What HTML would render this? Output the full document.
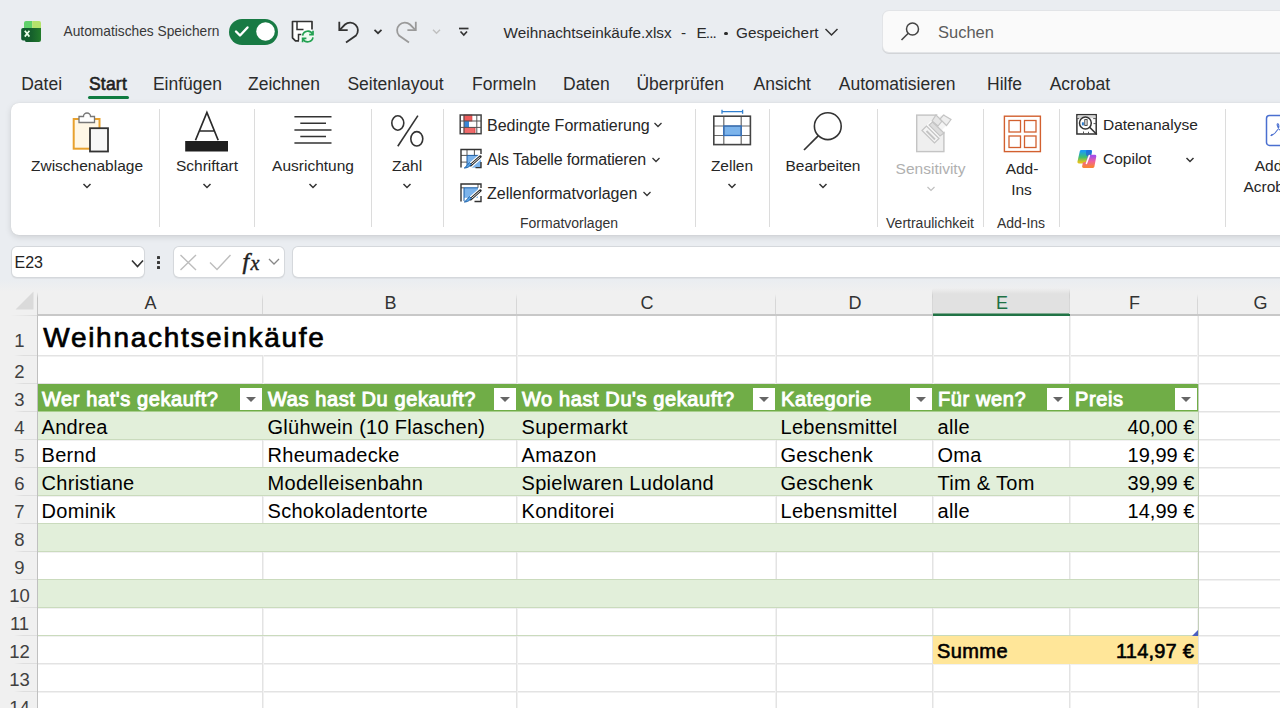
<!DOCTYPE html>
<html><head><meta charset="utf-8"><style>
html,body{margin:0;padding:0;}
body{width:1280px;height:708px;overflow:hidden;position:relative;background:#eaedf1;font-family:"Liberation Sans",sans-serif;}
.t{position:absolute;white-space:nowrap;line-height:1;}
.r{position:absolute;}
svg.r{overflow:visible;}
</style></head><body>
<svg class="r" style="left:14px;top:14px;" width="34" height="34" viewBox="0 0 34 34">
<defs><linearGradient id="xlb" x1="0" y1="0" x2="1" y2="0"><stop offset="0" stop-color="#0d5a2f"/><stop offset="0.5" stop-color="#155f2c"/><stop offset="1" stop-color="#237b2b"/></linearGradient></defs>
<path d="M10 9 Q10 7 12 7 H18.2 V14.2 H10z" fill="#60d16b"/>
<path d="M18.2 7 H25.2 Q27 7 27 9 V14.2 H18.2z" fill="#b4e36b"/>
<path d="M9 14 H27 V26 Q27 28 25 28 H12.5 Q11 28 11 26.5 H9 Q7.2 26.5 7.2 24.7 V15.8 Q7.2 14 9 14z" fill="url(#xlb)"/>
<path d="M10.8 16.8 L15.4 22.6 M15.4 16.8 L10.8 22.6" stroke="#e9ffe9" stroke-width="1.7"/>
</svg>
<span class="t" style="top:25.31px;font-size:13.75px;color:#383838;left:63.50px;">Automatisches Speichern</span>
<div class="r" style="left:229px;top:18.5px;width:48.5px;height:26px;background:#187a44;border-radius:13px;"></div>
<svg class="r" style="left:228px;top:18px;" width="49" height="27" viewBox="0 0 49 27">
<path d="M8 13.5 L12 17.5 L19.5 9.5" stroke="#fff" stroke-width="2.4" fill="none" stroke-linecap="round" stroke-linejoin="round"/>
<circle cx="37.5" cy="13.5" r="9.3" fill="#fff"/>
</svg>
<svg class="r" style="left:285px;top:15px;" width="40" height="33" viewBox="0 0 40 33">
<path d="M7.5 6.5 H27 V22 L22 26 H10.5 L7.5 23z" fill="#fff"/>
<path d="M14 25.8 H10.5 L7.5 22.8 V6.5 H27 V14.5" stroke="#333" stroke-width="1.7" fill="none" stroke-linejoin="round"/>
<path d="M12 6.5 V14.5 H18.5" stroke="#333" stroke-width="1.5" fill="none"/>
<path d="M13.5 25.5 V19.5 H16.5" stroke="#333" stroke-width="1.5" fill="none"/>
<circle cx="22.8" cy="21.4" r="6.6" fill="#eef9f0"/>
<path d="M17.6 20.6 A5.3 5.3 0 0 1 27.6 19.2" stroke="#22a052" stroke-width="1.7" fill="none"/>
<path d="M28 15.8 V19.6 H24.2" stroke="#22a052" stroke-width="1.7" fill="none"/>
<path d="M28 22.4 A5.3 5.3 0 0 1 18 23.8" stroke="#22a052" stroke-width="1.7" fill="none"/>
<path d="M17.6 27.2 V23.3 H21.4" stroke="#22a052" stroke-width="1.7" fill="none"/>
</svg>
<svg class="r" style="left:332px;top:15px;" width="144" height="33" viewBox="0 0 144 33">
<path d="M7.3 6.7 V15.2 H15.7" stroke="#333" stroke-width="1.8" fill="none"/>
<path d="M7.8 14.8 L13 9.5 A7.8 7.8 0 0 1 24 20.5 L14 27.5" stroke="#333" stroke-width="1.8" fill="none"/>
<path d="M42.5 14.8 L46 18.2 L49.5 14.8" stroke="#333" stroke-width="1.7" fill="none"/>
<path d="M83.8 6.7 V15.2 H75.4" stroke="#9a9a9a" stroke-width="1.8" fill="none"/>
<path d="M83.3 14.8 L78 9.5 A7.8 7.8 0 0 0 67 20.5 L77 27.5" stroke="#9a9a9a" stroke-width="1.8" fill="none"/>
<path d="M101 14.8 L104.5 18.2 L108 14.8" stroke="#c0c0c0" stroke-width="1.5" fill="none"/>
<path d="M127 13.5 H136.5" stroke="#333" stroke-width="1.7"/>
<path d="M128.5 16.5 L131.8 20 L135 16.5" stroke="#333" stroke-width="1.7" fill="none"/>
</svg>
<span class="t" style="top:24.99px;font-size:15.3px;color:#2b2b2b;left:503.60px;">Weihnachtseinkäufe.xlsx</span>
<span class="t" style="top:24.99px;font-size:15.3px;color:#2b2b2b;left:681.00px;">-</span>
<span class="t" style="top:24.99px;font-size:15.3px;color:#2b2b2b;letter-spacing:-0.9px;left:696.50px;">E...</span>
<div class="r" style="left:724px;top:31.5px;width:3.5px;height:3.5px;background:#2b2b2b;border-radius:2px;"></div>
<span class="t" style="top:24.99px;font-size:15.3px;color:#2b2b2b;left:736.00px;">Gespeichert</span>
<svg class="r" style="left:824px;top:27px;" width="16" height="10" viewBox="0 0 16 10"><path d="M1.5 2 L7.5 8 L13.5 2" stroke="#333" stroke-width="1.5" fill="none"/></svg>
<div class="r" style="left:883px;top:11px;width:420px;height:41px;background:#fafafa;border-radius:6px;box-shadow:0 0 0 1px #e2e4e7, 0 1px 0 1px #d2d4d7;"></div>
<svg class="r" style="left:898px;top:20px;" width="24" height="24" viewBox="0 0 24 24">
<circle cx="14.5" cy="9" r="6" stroke="#444" stroke-width="1.5" fill="none"/>
<path d="M10.3 13.2 L3.5 20" stroke="#444" stroke-width="1.6"/>
</svg>
<span class="t" style="top:23.98px;font-size:16.5px;color:#5c5c5c;left:938.00px;">Suchen</span>
<span class="t" style="top:76.22px;font-size:17.5px;color:#2b2b2b;left:21.20px;">Datei</span>
<span class="t" style="top:76.22px;font-size:17.5px;color:#2b2b2b;left:152.90px;">Einfügen</span>
<span class="t" style="top:76.22px;font-size:17.5px;color:#2b2b2b;left:248.00px;">Zeichnen</span>
<span class="t" style="top:76.22px;font-size:17.5px;color:#2b2b2b;left:347.40px;">Seitenlayout</span>
<span class="t" style="top:76.22px;font-size:17.5px;color:#2b2b2b;left:472.00px;">Formeln</span>
<span class="t" style="top:76.22px;font-size:17.5px;color:#2b2b2b;left:563.00px;">Daten</span>
<span class="t" style="top:76.22px;font-size:17.5px;color:#2b2b2b;left:636.40px;">Überprüfen</span>
<span class="t" style="top:76.22px;font-size:17.5px;color:#2b2b2b;left:753.60px;">Ansicht</span>
<span class="t" style="top:76.22px;font-size:17.5px;color:#2b2b2b;left:838.80px;">Automatisieren</span>
<span class="t" style="top:76.22px;font-size:17.5px;color:#2b2b2b;left:987.00px;">Hilfe</span>
<span class="t" style="top:76.22px;font-size:17.5px;color:#2b2b2b;left:1049.70px;">Acrobat</span>
<span class="t" style="top:76.22px;font-size:17.5px;color:#1f1f1f;letter-spacing:0.2px;left:89.00px;-webkit-text-stroke:0.6px #1f1f1f;">Start</span>
<div class="r" style="left:88px;top:96px;width:41px;height:3px;background:#107c41;border-radius:2px;"></div>
<div class="r" style="left:10.5px;top:103px;width:1300px;height:132px;background:#ffffff;border-radius:8px;box-shadow:0 2px 6px rgba(0,0,0,0.13), 0 0 1px rgba(0,0,0,0.12);"></div>
<div class="r" style="left:159px;top:109px;width:1px;height:118px;background:#dcdcdc;"></div>
<div class="r" style="left:254px;top:109px;width:1px;height:118px;background:#dcdcdc;"></div>
<div class="r" style="left:371px;top:109px;width:1px;height:118px;background:#dcdcdc;"></div>
<div class="r" style="left:443px;top:109px;width:1px;height:118px;background:#dcdcdc;"></div>
<div class="r" style="left:695px;top:109px;width:1px;height:118px;background:#dcdcdc;"></div>
<div class="r" style="left:769px;top:109px;width:1px;height:118px;background:#dcdcdc;"></div>
<div class="r" style="left:877px;top:109px;width:1px;height:118px;background:#dcdcdc;"></div>
<div class="r" style="left:983px;top:109px;width:1px;height:118px;background:#dcdcdc;"></div>
<div class="r" style="left:1059px;top:109px;width:1px;height:118px;background:#dcdcdc;"></div>
<div class="r" style="left:1225px;top:109px;width:1px;height:118px;background:#dcdcdc;"></div>
<svg class="r" style="left:66px;top:106px;" width="50" height="50" viewBox="0 0 50 50">
<rect x="7.7" y="13" width="25.8" height="29.7" fill="#fff7e6" stroke="#e8a12e" stroke-width="2"/>
<path d="M13 10.5 H17.5 A3.5 3.5 0 0 1 24.5 10.5 H28.5 V16.5 H13z" fill="#fff" stroke="#777" stroke-width="1.3"/>
<rect x="24" y="22.2" width="18" height="23.3" fill="#f7f7f7" stroke="#333" stroke-width="1.8"/>
</svg>
<span class="t" style="top:158.42px;font-size:15.5px;color:#262626;left:87.00px;transform:translateX(-50%);">Zwischenablage</span>
<svg class="r" style="left:81.5px;top:182px;" width="10" height="8" viewBox="0 0 10 8"><path d="M1.5 2 L5 5.5 L8.5 2" stroke="#333" stroke-width="1.5" fill="none"/></svg>
<svg class="r" style="left:180px;top:108px;" width="52" height="48" viewBox="0 0 52 48">
<path d="M15.5 32.2 L26.9 4.4 L38.2 32.2 M19.3 23 H34.5" stroke="#2a2a2a" stroke-width="1.7" fill="none"/>
<rect x="5.2" y="33" width="42.8" height="10.5" fill="#1e1e1e"/>
</svg>
<span class="t" style="top:158.42px;font-size:15.5px;color:#262626;left:207.00px;transform:translateX(-50%);">Schriftart</span>
<svg class="r" style="left:201.5px;top:182px;" width="10" height="8" viewBox="0 0 10 8"><path d="M1.5 2 L5 5.5 L8.5 2" stroke="#333" stroke-width="1.5" fill="none"/></svg>
<svg class="r" style="left:290px;top:110px;" width="46" height="40" viewBox="0 0 46 40">
<path d="M4.4 6.8 H41.5 M10.3 13.3 H36 M4.4 20 H41.5 M10.3 26.6 H36 M4.4 33.1 H41.5" stroke="#333" stroke-width="1.5"/>
</svg>
<span class="t" style="top:158.42px;font-size:15.5px;color:#262626;left:313.00px;transform:translateX(-50%);">Ausrichtung</span>
<svg class="r" style="left:308px;top:182px;" width="10" height="8" viewBox="0 0 10 8"><path d="M1.5 2 L5 5.5 L8.5 2" stroke="#333" stroke-width="1.5" fill="none"/></svg>
<svg class="r" style="left:388px;top:112px;" width="40" height="38" viewBox="0 0 40 38">
<ellipse cx="9.8" cy="11" rx="6" ry="7.2" stroke="#333" stroke-width="1.6" fill="none"/>
<ellipse cx="28.8" cy="26.8" rx="6" ry="7.2" stroke="#333" stroke-width="1.6" fill="none"/>
<path d="M29.9 3.6 L9.8 34.2" stroke="#333" stroke-width="1.6"/>
</svg>
<span class="t" style="top:158.42px;font-size:15.5px;color:#262626;left:407.00px;transform:translateX(-50%);">Zahl</span>
<svg class="r" style="left:401.5px;top:182px;" width="10" height="8" viewBox="0 0 10 8"><path d="M1.5 2 L5 5.5 L8.5 2" stroke="#333" stroke-width="1.5" fill="none"/></svg>
<svg class="r" style="left:456px;top:110px;" width="32" height="96" viewBox="0 0 32 96">
<rect x="4.2" y="5" width="20.9" height="18.7" fill="#fff"/>
<rect x="8" y="5" width="7.9" height="6" fill="#ee5a5a" stroke="#d83a3a" stroke-width="0.8"/>
<rect x="8" y="11" width="5" height="6.4" fill="#3a86d6"/>
<rect x="8" y="17.4" width="11" height="6.3" fill="#f06a6a" stroke="#d83a3a" stroke-width="0.8"/>
<path d="M4.2 11 H25.1 M4.2 17.4 H25.1 M8 5 V23.7 M20.8 5 V23.7" stroke="#555" stroke-width="1"/>
<rect x="4.2" y="5" width="20.9" height="18.7" fill="none" stroke="#444" stroke-width="1.5"/>
<rect x="11" y="45.4" width="14" height="12.2" fill="#7cb4ec"/>
<path d="M11 45.4 H23 M11 45.4 V57.6" stroke="#1a5fa8" stroke-width="1"/>
<path d="M5 45.4 H11 M5 52.1 H11 M11 39.5 V45.4 M18.4 39.5 V45.4" stroke="#555" stroke-width="1"/>
<path d="M5 57.6 V39.5 H25 V44" stroke="#333" stroke-width="1.4" fill="none"/>
<path d="M25 52 V57.6 H19.5" stroke="#333" stroke-width="1.4" fill="none"/>
<path d="M24.4 46.6 L13.6 56.2" stroke="#fff" stroke-width="5" stroke-linecap="round"/>
<path d="M24.4 46.6 L14.6 55.2" stroke="#2a2a2a" stroke-width="2.6" stroke-linecap="round"/>
<path d="M23.8 47.2 L15 54.8" stroke="#f4f4f4" stroke-width="0.9"/>
<path d="M8.3 58 C10.8 58 12.8 57 13.9 55.8 L15.3 54.3 L13.6 52.7 L12 54.2 C10.8 55.4 10.2 56.8 8.3 58z" fill="#5aa9ee" stroke="#1a5fa8" stroke-width="1"/>
<rect x="8" y="77.8" width="14" height="10" fill="#7cb4ec"/>
<path d="M8 77.8 H22 M8 77.8 V91" stroke="#1a5fa8" stroke-width="1"/>
<path d="M5 77.8 H8 M22 74 V77.8" stroke="#555" stroke-width="1"/>
<path d="M5 91.5 V74 H25 V78" stroke="#333" stroke-width="1.4" fill="none"/>
<path d="M25 86 V91.5 H18.5" stroke="#333" stroke-width="1.4" fill="none"/>
<path d="M24.4 80.6 L13.6 90.2" stroke="#fff" stroke-width="5" stroke-linecap="round"/>
<path d="M24.4 80.6 L14.6 89.2" stroke="#2a2a2a" stroke-width="2.6" stroke-linecap="round"/>
<path d="M23.8 81.2 L15 88.8" stroke="#f4f4f4" stroke-width="0.9"/>
<path d="M8.3 92 C10.8 92 12.8 91 13.9 89.8 L15.3 88.3 L13.6 86.7 L12 88.2 C10.8 89.4 10.2 90.8 8.3 92z" fill="#5aa9ee" stroke="#1a5fa8" stroke-width="1"/>
</svg>
<span class="t" style="top:117.90px;font-size:16px;color:#262626;left:487.00px;">Bedingte Formatierung</span>
<span class="t" style="top:151.90px;font-size:16px;color:#262626;letter-spacing:-0.15px;left:487.00px;">Als Tabelle formatieren</span>
<span class="t" style="top:185.90px;font-size:16px;color:#262626;left:487.00px;">Zellenformatvorlagen</span>
<svg class="r" style="left:653px;top:121px;" width="10" height="8" viewBox="0 0 10 8"><path d="M1.5 2 L5 5.5 L8.5 2" stroke="#333" stroke-width="1.3" fill="none"/></svg>
<svg class="r" style="left:650.5px;top:155.5px;" width="10" height="8" viewBox="0 0 10 8"><path d="M1.5 2 L5 5.5 L8.5 2" stroke="#333" stroke-width="1.3" fill="none"/></svg>
<svg class="r" style="left:641.5px;top:189.5px;" width="10" height="8" viewBox="0 0 10 8"><path d="M1.5 2 L5 5.5 L8.5 2" stroke="#333" stroke-width="1.3" fill="none"/></svg>
<span class="t" style="top:216.10px;font-size:14px;color:#333;left:569.00px;transform:translateX(-50%);">Formatvorlagen</span>
<svg class="r" style="left:710px;top:106px;" width="46" height="44" viewBox="0 0 46 44">
<path d="M12 5.7 H32.6 M12 3.7 V7.7 M32.6 3.7 V7.7" stroke="#2f7fd0" stroke-width="1.3"/>
<rect x="13.8" y="20" width="17.4" height="9.5" fill="#7cb4ec"/>
<path d="M3.8 20 H40.4 M3.8 29.5 H40.4 M13.8 10.2 V38.6 M31.2 10.2 V38.6" stroke="#6a6a6a" stroke-width="1.2"/>
<rect x="13.8" y="20" width="17.4" height="9.5" fill="none" stroke="#2f6fbf" stroke-width="1.3"/>
<rect x="3.8" y="10.2" width="36.6" height="28.4" fill="none" stroke="#444" stroke-width="1.6"/>
</svg>
<span class="t" style="top:158.42px;font-size:15.5px;color:#262626;left:732.00px;transform:translateX(-50%);">Zellen</span>
<svg class="r" style="left:726.5px;top:182px;" width="10" height="8" viewBox="0 0 10 8"><path d="M1.5 2 L5 5.5 L8.5 2" stroke="#333" stroke-width="1.5" fill="none"/></svg>
<svg class="r" style="left:800px;top:108px;" width="46" height="46" viewBox="0 0 46 46">
<circle cx="27.8" cy="18.2" r="13.4" stroke="#333" stroke-width="1.6" fill="none"/>
<path d="M18.4 27.6 L4 42" stroke="#333" stroke-width="1.7"/>
</svg>
<span class="t" style="top:158.42px;font-size:15.5px;color:#262626;left:823.00px;transform:translateX(-50%);">Bearbeiten</span>
<svg class="r" style="left:817.5px;top:182px;" width="10" height="8" viewBox="0 0 10 8"><path d="M1.5 2 L5 5.5 L8.5 2" stroke="#333" stroke-width="1.5" fill="none"/></svg>
<svg class="r" style="left:905px;top:105px;" width="55" height="55" viewBox="0 0 55 55">
<rect x="11.7" y="10.1" width="27.2" height="36.5" fill="#efefef" stroke="#c4c4c4" stroke-width="1.4"/>
<path d="M24 20 L36 8 L46 18 L34 30z" fill="#f4f4f4" stroke="#fff" stroke-width="3"/>
<path d="M27 16 L31 10 L37 16 L33 21z" fill="#e6e6e6" stroke="#c4c4c4" stroke-width="1.2"/>
<path d="M38.5 10 L46 14.5 L41.5 20.5 L35 14z" fill="#efefef" stroke="#c4c4c4" stroke-width="1.2"/>
<path d="M27.5 17 L39 28 L35 31 L24 20z" fill="#ddd" stroke="#c4c4c4" stroke-width="1.2"/>
<path d="M17 25.5 L21.5 21 L34 33.5 L29.5 38z" fill="#f4f4f4" stroke="#c4c4c4" stroke-width="1.2"/>
<path d="M21.5 26 L30 34.5" stroke="#c4c4c4" stroke-width="2"/>
</svg>
<span class="t" style="top:161.32px;font-size:15.5px;color:#b0b0b0;left:930.50px;transform:translateX(-50%);">Sensitivity</span>
<svg class="r" style="left:925.5px;top:185px;" width="10" height="8" viewBox="0 0 10 8"><path d="M1.5 2 L5 5.5 L8.5 2" stroke="#c0c0c0" stroke-width="1.2" fill="none"/></svg>
<span class="t" style="top:215.60px;font-size:14px;color:#333;left:930.00px;transform:translateX(-50%);">Vertraulichkeit</span>
<svg class="r" style="left:1000px;top:112px;" width="44" height="44" viewBox="0 0 44 44">
<rect x="4.4" y="4.2" width="36" height="35.4" fill="none" stroke="#d2602f" stroke-width="1.4"/>
<rect x="9" y="8.5" width="11.5" height="11.5" fill="none" stroke="#d2602f" stroke-width="1.3"/>
<rect x="24.5" y="8.5" width="11.5" height="11.5" fill="none" stroke="#d2602f" stroke-width="1.3"/>
<rect x="9" y="24" width="11.5" height="11.5" fill="none" stroke="#d2602f" stroke-width="1.3"/>
<rect x="24.5" y="24" width="11.5" height="11.5" fill="none" stroke="#d2602f" stroke-width="1.3"/>
</svg>
<span class="t" style="top:160.62px;font-size:15.5px;color:#262626;left:1022.00px;transform:translateX(-50%);">Add-</span>
<span class="t" style="top:181.82px;font-size:15.5px;color:#262626;left:1021.50px;transform:translateX(-50%);">Ins</span>
<span class="t" style="top:216.10px;font-size:14px;color:#333;left:1021.00px;transform:translateX(-50%);">Add-Ins</span>
<svg class="r" style="left:1072px;top:110px;" width="30" height="62" viewBox="0 0 30 62">
<rect x="4.9" y="4.7" width="19.3" height="19.3" fill="#fff" stroke="#333" stroke-width="1.5"/>
<rect x="5.6" y="5.4" width="17.9" height="2.8" fill="#d4d4d4"/>
<path d="M24.2 8.6 H21.2 M24.2 13.6 H21.5 M11.5 24 V21.5 M16.5 24 V21.8 M4.9 8.6 H7.2" stroke="#555" stroke-width="1"/>
<circle cx="13.4" cy="13" r="5.9" fill="#fff" stroke="#333" stroke-width="1.5"/>
<rect x="9.9" y="12.3" width="2" height="3.1" fill="#2f7fd0"/>
<rect x="12.8" y="9.6" width="2.3" height="5.8" fill="#fff" stroke="#333" stroke-width="0.9"/>
<path d="M17.6 17.2 L24.9 24.5" stroke="#333" stroke-width="1.6"/>
<defs><linearGradient id="cp2" x1="0" y1="0" x2="0" y2="1"><stop offset="0" stop-color="#1b9ef0"/><stop offset="0.55" stop-color="#3fbf6e"/><stop offset="1" stop-color="#e0c21c"/></linearGradient>
<linearGradient id="cp" x1="0" y1="0" x2="0" y2="1"><stop offset="0" stop-color="#a64ee8"/><stop offset="0.5" stop-color="#f0609c"/><stop offset="1" stop-color="#f9823a"/></linearGradient></defs>
<path d="M9.2 41.4 H18.6 L17.9 44.6 H15.3 L13 52 H6.8z" fill="url(#cp2)" stroke="url(#cp2)" stroke-width="2.8" stroke-linejoin="round"/>
<path d="M15.3 41.4 H18.6 L17.9 44.6 H15.3z" fill="#2160d8" stroke="#2160d8" stroke-width="2.6" stroke-linejoin="round" opacity="0.7"/>
<path d="M17.4 46.2 H22.9 L21 56.6 H11.5 L12.1 53.6 H14.8z" fill="url(#cp)" stroke="url(#cp)" stroke-width="2.8" stroke-linejoin="round"/>
<path d="M17.4 45.6 L14.4 53.4" stroke="#fff" stroke-width="1.5" stroke-linecap="round"/>
</svg>
<span class="t" style="top:117.33px;font-size:15.5px;color:#262626;left:1103.00px;">Datenanalyse</span>
<span class="t" style="top:151.22px;font-size:15.5px;color:#262626;left:1103.00px;">Copilot</span>
<svg class="r" style="left:1185px;top:155.5px;" width="10" height="8" viewBox="0 0 10 8"><path d="M1.5 2 L5 5.5 L8.5 2" stroke="#333" stroke-width="1.5" fill="none"/></svg>
<svg class="r" style="left:1262px;top:112px;" width="30" height="38" viewBox="0 0 30 38">
<rect x="4.5" y="3.6" width="26" height="29.8" rx="3" fill="none" stroke="#4a6fd0" stroke-width="1.5"/>
<path d="M9 23.8 C10.5 22.5 11.8 22.3 13 21 L15.8 17.5 C16.8 16 17 13.8 16.6 12.6 C16.1 11.3 14.9 11.6 15.2 13.2 C15.5 15 16.5 16.8 18.5 18.5" stroke="#4a6fd0" stroke-width="1.1" fill="none"/>
<path d="M9 23.8 C8.5 23 9.8 22 10.8 22.5" stroke="#4a6fd0" stroke-width="1" fill="none"/>
</svg>
<span class="t" style="top:158.12px;font-size:15.5px;color:#262626;left:1254.70px;">Add</span>
<span class="t" style="top:179.32px;font-size:15.5px;color:#262626;left:1243.40px;">Acrob</span>
<div class="r" style="left:12px;top:247px;width:132px;height:30px;background:#ffffff;border-radius:5px;box-shadow:0 0 0 1px #d5d8dc, 0 1px 1px 1px rgba(0,0,0,0.05);"></div>
<span class="t" style="top:255.40px;font-size:16px;color:#222;left:14.50px;">E23</span>
<svg class="r" style="left:128px;top:256px;" width="18" height="16" viewBox="0 0 18 16"><path d="M4 4.5 L9.5 10.5 L15 4.5" stroke="#333" stroke-width="1.6" fill="none"/></svg>
<div class="r" style="left:157px;top:255.5px;width:3px;height:3px;background:#3a3a3a;border-radius:0.6px;"></div>
<div class="r" style="left:157px;top:260.5px;width:3px;height:3px;background:#3a3a3a;border-radius:0.6px;"></div>
<div class="r" style="left:157px;top:265.5px;width:3px;height:3px;background:#3a3a3a;border-radius:0.6px;"></div>
<div class="r" style="left:173.5px;top:247px;width:110px;height:30px;background:#ffffff;border-radius:5px;box-shadow:0 0 0 1px #d5d8dc, 0 1px 1px 1px rgba(0,0,0,0.05);"></div>
<svg class="r" style="left:172px;top:246px;" width="114" height="32" viewBox="0 0 114 32">
<path d="M8.5 9 L24 24 M24 9 L8.5 24" stroke="#bdbdbd" stroke-width="1.4"/>
<path d="M38 16.5 L45 23.5 L58.5 9" stroke="#bdbdbd" stroke-width="1.4" fill="none"/>
<path d="M97 13 L102 18 L107 13" stroke="#888" stroke-width="1.3" fill="none"/>
</svg>
<span class="t" style="top:249.10px;font-size:24px;color:#222;left:242.50px;font-family:'Liberation Serif';font-style:italic;-webkit-text-stroke:0.5px #222;">f</span>
<span class="t" style="top:252.50px;font-size:20px;color:#222;left:250.50px;font-family:'Liberation Serif';font-style:italic;-webkit-text-stroke:0.4px #222;">x</span>
<div class="r" style="left:293px;top:247px;width:1010px;height:30px;background:#ffffff;border-radius:5px;box-shadow:0 0 0 1px #d5d8dc, 0 1px 1px 1px rgba(0,0,0,0.05);"></div>
<div class="r" style="left:0px;top:279px;width:1280px;height:37px;background:linear-gradient(#eaedf1 0px, #f0f0f0 13px);"></div>
<div class="r" style="left:0px;top:316px;width:37px;height:400px;background:#f0f0f0;"></div>
<div class="r" style="left:933px;top:288px;width:137px;height:27px;background:linear-gradient(rgba(225,225,225,0) 0px, #e1e1e1 6px);"></div>
<svg class="r" style="left:12px;top:288px;" width="26" height="26" viewBox="0 0 26 26"><path d="M21.5 3.5 V21.5 H3.5z" fill="#dadada"/></svg>
<div class="r" style="left:37px;top:314px;width:1243px;height:2px;background:#c8c8c8;"></div>
<div class="r" style="left:10px;top:315px;width:27px;height:1px;background:linear-gradient(90deg, rgba(220,220,220,0), #dcdcdc);"></div>
<div class="r" style="left:933px;top:314px;width:137px;height:2px;background:#217346;"></div>
<div class="r" style="left:933px;top:313px;width:137px;height:1px;background:#7faa8f;"></div>
<div class="r" style="left:932px;top:289px;width:1px;height:25px;background:linear-gradient(rgba(200,200,200,0), #cbcbcb 8px);"></div>
<div class="r" style="left:1069px;top:289px;width:1px;height:25px;background:linear-gradient(rgba(200,200,200,0), #cbcbcb 8px);"></div>
<div class="r" style="left:262px;top:294px;width:1px;height:20px;background:linear-gradient(rgba(215,215,215,0), #d7d7d7 6px);"></div>
<div class="r" style="left:516px;top:294px;width:1px;height:20px;background:linear-gradient(rgba(215,215,215,0), #d7d7d7 6px);"></div>
<div class="r" style="left:775px;top:294px;width:1px;height:20px;background:linear-gradient(rgba(215,215,215,0), #d7d7d7 6px);"></div>
<div class="r" style="left:932px;top:294px;width:1px;height:20px;background:linear-gradient(rgba(215,215,215,0), #d7d7d7 6px);"></div>
<div class="r" style="left:1069px;top:294px;width:1px;height:20px;background:linear-gradient(rgba(215,215,215,0), #d7d7d7 6px);"></div>
<div class="r" style="left:1197px;top:294px;width:1px;height:20px;background:linear-gradient(rgba(215,215,215,0), #d7d7d7 6px);"></div>
<div class="r" style="left:37px;top:292px;width:1px;height:24px;background:linear-gradient(rgba(190,190,190,0), #c4c4c4 6px);"></div>
<div class="r" style="left:37px;top:316px;width:1px;height:400px;background:#c0c0c0;"></div>
<div class="r" style="left:14px;top:355px;width:23px;height:1px;background:linear-gradient(90deg, rgba(222,222,222,0), #dedede 40%);"></div>
<div class="r" style="left:14px;top:383px;width:23px;height:1px;background:linear-gradient(90deg, rgba(222,222,222,0), #dedede 40%);"></div>
<div class="r" style="left:14px;top:411px;width:23px;height:1px;background:linear-gradient(90deg, rgba(222,222,222,0), #dedede 40%);"></div>
<div class="r" style="left:14px;top:439px;width:23px;height:1px;background:linear-gradient(90deg, rgba(222,222,222,0), #dedede 40%);"></div>
<div class="r" style="left:14px;top:467px;width:23px;height:1px;background:linear-gradient(90deg, rgba(222,222,222,0), #dedede 40%);"></div>
<div class="r" style="left:14px;top:495px;width:23px;height:1px;background:linear-gradient(90deg, rgba(222,222,222,0), #dedede 40%);"></div>
<div class="r" style="left:14px;top:523px;width:23px;height:1px;background:linear-gradient(90deg, rgba(222,222,222,0), #dedede 40%);"></div>
<div class="r" style="left:14px;top:551px;width:23px;height:1px;background:linear-gradient(90deg, rgba(222,222,222,0), #dedede 40%);"></div>
<div class="r" style="left:14px;top:579px;width:23px;height:1px;background:linear-gradient(90deg, rgba(222,222,222,0), #dedede 40%);"></div>
<div class="r" style="left:14px;top:607px;width:23px;height:1px;background:linear-gradient(90deg, rgba(222,222,222,0), #dedede 40%);"></div>
<div class="r" style="left:14px;top:635px;width:23px;height:1px;background:linear-gradient(90deg, rgba(222,222,222,0), #dedede 40%);"></div>
<div class="r" style="left:14px;top:663px;width:23px;height:1px;background:linear-gradient(90deg, rgba(222,222,222,0), #dedede 40%);"></div>
<div class="r" style="left:14px;top:691px;width:23px;height:1px;background:linear-gradient(90deg, rgba(222,222,222,0), #dedede 40%);"></div>
<div class="r" style="left:14px;top:719px;width:23px;height:1px;background:linear-gradient(90deg, rgba(222,222,222,0), #dedede 40%);"></div>
<div class="r" style="left:38px;top:316px;width:1242px;height:400px;background:#ffffff;"></div>
<div class="r" style="left:38px;top:355px;width:1242px;height:1px;background:#e3e3e3;"></div>
<div class="r" style="left:38px;top:356px;width:1242px;height:1px;background:#f1f1f1;"></div>
<div class="r" style="left:38px;top:383px;width:1242px;height:1px;background:#e3e3e3;"></div>
<div class="r" style="left:38px;top:384px;width:1242px;height:1px;background:#f1f1f1;"></div>
<div class="r" style="left:38px;top:411px;width:1242px;height:1px;background:#e3e3e3;"></div>
<div class="r" style="left:38px;top:412px;width:1242px;height:1px;background:#f1f1f1;"></div>
<div class="r" style="left:38px;top:439px;width:1242px;height:1px;background:#e3e3e3;"></div>
<div class="r" style="left:38px;top:440px;width:1242px;height:1px;background:#f1f1f1;"></div>
<div class="r" style="left:38px;top:467px;width:1242px;height:1px;background:#e3e3e3;"></div>
<div class="r" style="left:38px;top:468px;width:1242px;height:1px;background:#f1f1f1;"></div>
<div class="r" style="left:38px;top:495px;width:1242px;height:1px;background:#e3e3e3;"></div>
<div class="r" style="left:38px;top:496px;width:1242px;height:1px;background:#f1f1f1;"></div>
<div class="r" style="left:38px;top:523px;width:1242px;height:1px;background:#e3e3e3;"></div>
<div class="r" style="left:38px;top:524px;width:1242px;height:1px;background:#f1f1f1;"></div>
<div class="r" style="left:38px;top:551px;width:1242px;height:1px;background:#e3e3e3;"></div>
<div class="r" style="left:38px;top:552px;width:1242px;height:1px;background:#f1f1f1;"></div>
<div class="r" style="left:38px;top:579px;width:1242px;height:1px;background:#e3e3e3;"></div>
<div class="r" style="left:38px;top:580px;width:1242px;height:1px;background:#f1f1f1;"></div>
<div class="r" style="left:38px;top:607px;width:1242px;height:1px;background:#e3e3e3;"></div>
<div class="r" style="left:38px;top:608px;width:1242px;height:1px;background:#f1f1f1;"></div>
<div class="r" style="left:38px;top:635px;width:1242px;height:1px;background:#e3e3e3;"></div>
<div class="r" style="left:38px;top:636px;width:1242px;height:1px;background:#f1f1f1;"></div>
<div class="r" style="left:38px;top:663px;width:1242px;height:1px;background:#e3e3e3;"></div>
<div class="r" style="left:38px;top:664px;width:1242px;height:1px;background:#f1f1f1;"></div>
<div class="r" style="left:38px;top:691px;width:1242px;height:1px;background:#e3e3e3;"></div>
<div class="r" style="left:38px;top:692px;width:1242px;height:1px;background:#f1f1f1;"></div>
<div class="r" style="left:38px;top:719px;width:1242px;height:1px;background:#e3e3e3;"></div>
<div class="r" style="left:38px;top:720px;width:1242px;height:1px;background:#f1f1f1;"></div>
<div class="r" style="left:262px;top:316px;width:1px;height:400px;background:#e3e3e3;"></div>
<div class="r" style="left:263px;top:316px;width:1px;height:400px;background:#f1f1f1;"></div>
<div class="r" style="left:516px;top:316px;width:1px;height:400px;background:#e3e3e3;"></div>
<div class="r" style="left:517px;top:316px;width:1px;height:400px;background:#f1f1f1;"></div>
<div class="r" style="left:776px;top:316px;width:1px;height:400px;background:#e3e3e3;"></div>
<div class="r" style="left:775px;top:316px;width:1px;height:400px;background:#f1f1f1;"></div>
<div class="r" style="left:932px;top:316px;width:1px;height:400px;background:#e3e3e3;"></div>
<div class="r" style="left:933px;top:316px;width:1px;height:400px;background:#f1f1f1;"></div>
<div class="r" style="left:1069px;top:316px;width:1px;height:400px;background:#e3e3e3;"></div>
<div class="r" style="left:1070px;top:316px;width:1px;height:400px;background:#f1f1f1;"></div>
<div class="r" style="left:1198px;top:316px;width:1px;height:400px;background:#e3e3e3;"></div>
<div class="r" style="left:1197px;top:316px;width:1px;height:400px;background:#f1f1f1;"></div>
<div class="r" style="left:261px;top:316px;width:3px;height:39px;background:#ffffff;"></div>
<div class="r" style="left:38px;top:384px;width:1160px;height:27px;background:#70ad47;"></div>
<div class="r" style="left:38px;top:411px;width:1160px;height:1px;background:#a9cf8f;"></div>
<div class="r" style="left:38px;top:412px;width:1160px;height:27px;background:#e2efda;"></div>
<div class="r" style="left:38px;top:439px;width:1160px;height:1px;background:#cadbbd;"></div>
<div class="r" style="left:38px;top:468px;width:1160px;height:27px;background:#e2efda;"></div>
<div class="r" style="left:38px;top:495px;width:1160px;height:1px;background:#cadbbd;"></div>
<div class="r" style="left:38px;top:524px;width:1160px;height:27px;background:#e2efda;"></div>
<div class="r" style="left:38px;top:551px;width:1160px;height:1px;background:#cadbbd;"></div>
<div class="r" style="left:38px;top:580px;width:1160px;height:27px;background:#e2efda;"></div>
<div class="r" style="left:38px;top:607px;width:1160px;height:1px;background:#cadbbd;"></div>
<div class="r" style="left:38px;top:467px;width:1160px;height:1px;background:#cadbbd;"></div>
<div class="r" style="left:38px;top:523px;width:1160px;height:1px;background:#cadbbd;"></div>
<div class="r" style="left:38px;top:579px;width:1160px;height:1px;background:#cadbbd;"></div>
<div class="r" style="left:38px;top:635px;width:1160px;height:1px;background:#cadbbd;"></div>
<div class="r" style="left:1198px;top:384px;width:1px;height:252px;background:#c3cfba;"></div>
<div class="r" style="left:933px;top:636px;width:265px;height:28px;background:#ffe699;"></div>
<svg class="r" style="left:1191px;top:629px;" width="8" height="8" viewBox="0 0 8 8"><path d="M7 1 V7 H1z" fill="#4a5fc1"/></svg>
<div class="r" style="left:240px;top:388px;width:22px;height:22px;background:#ffffff;"></div>
<svg class="r" style="left:240px;top:388px;" width="22" height="22" viewBox="0 0 22 22"><path d="M6 9 H16 L11 14z" fill="#666"/></svg>
<div class="r" style="left:494px;top:388px;width:22px;height:22px;background:#ffffff;"></div>
<svg class="r" style="left:494px;top:388px;" width="22" height="22" viewBox="0 0 22 22"><path d="M6 9 H16 L11 14z" fill="#666"/></svg>
<div class="r" style="left:753px;top:388px;width:22px;height:22px;background:#ffffff;"></div>
<svg class="r" style="left:753px;top:388px;" width="22" height="22" viewBox="0 0 22 22"><path d="M6 9 H16 L11 14z" fill="#666"/></svg>
<div class="r" style="left:910px;top:388px;width:22px;height:22px;background:#ffffff;"></div>
<svg class="r" style="left:910px;top:388px;" width="22" height="22" viewBox="0 0 22 22"><path d="M6 9 H16 L11 14z" fill="#666"/></svg>
<div class="r" style="left:1047px;top:388px;width:22px;height:22px;background:#ffffff;"></div>
<svg class="r" style="left:1047px;top:388px;" width="22" height="22" viewBox="0 0 22 22"><path d="M6 9 H16 L11 14z" fill="#666"/></svg>
<div class="r" style="left:1175px;top:388px;width:22px;height:22px;background:#ffffff;"></div>
<svg class="r" style="left:1175px;top:388px;" width="22" height="22" viewBox="0 0 22 22"><path d="M6 9 H16 L11 14z" fill="#666"/></svg>
<span class="t" style="top:294.30px;font-size:18px;color:#333;left:150.50px;transform:translateX(-50%);">A</span>
<span class="t" style="top:294.30px;font-size:18px;color:#333;left:390.50px;transform:translateX(-50%);">B</span>
<span class="t" style="top:294.30px;font-size:18px;color:#333;left:647.00px;transform:translateX(-50%);">C</span>
<span class="t" style="top:294.30px;font-size:18px;color:#333;left:855.00px;transform:translateX(-50%);">D</span>
<span class="t" style="top:294.30px;font-size:18px;color:#1e7145;left:1002.00px;transform:translateX(-50%);">E</span>
<span class="t" style="top:294.30px;font-size:18px;color:#333;left:1134.50px;transform:translateX(-50%);">F</span>
<span class="t" style="top:294.30px;font-size:18px;color:#333;left:1260.50px;transform:translateX(-50%);">G</span>
<span class="t" style="top:332.27px;font-size:18.5px;color:#404040;left:19.50px;transform:translateX(-50%);">1</span>
<span class="t" style="top:362.57px;font-size:18.5px;color:#404040;left:19.50px;transform:translateX(-50%);">2</span>
<span class="t" style="top:390.57px;font-size:18.5px;color:#404040;left:19.50px;transform:translateX(-50%);">3</span>
<span class="t" style="top:418.57px;font-size:18.5px;color:#404040;left:19.50px;transform:translateX(-50%);">4</span>
<span class="t" style="top:446.57px;font-size:18.5px;color:#404040;left:19.50px;transform:translateX(-50%);">5</span>
<span class="t" style="top:474.57px;font-size:18.5px;color:#404040;left:19.50px;transform:translateX(-50%);">6</span>
<span class="t" style="top:502.57px;font-size:18.5px;color:#404040;left:19.50px;transform:translateX(-50%);">7</span>
<span class="t" style="top:530.57px;font-size:18.5px;color:#404040;left:19.50px;transform:translateX(-50%);">8</span>
<span class="t" style="top:558.57px;font-size:18.5px;color:#404040;left:19.50px;transform:translateX(-50%);">9</span>
<span class="t" style="top:586.57px;font-size:18.5px;color:#404040;left:19.50px;transform:translateX(-50%);">10</span>
<span class="t" style="top:614.57px;font-size:18.5px;color:#404040;left:19.50px;transform:translateX(-50%);">11</span>
<span class="t" style="top:642.57px;font-size:18.5px;color:#404040;left:19.50px;transform:translateX(-50%);">12</span>
<span class="t" style="top:670.57px;font-size:18.5px;color:#404040;left:19.50px;transform:translateX(-50%);">13</span>
<span class="t" style="top:698.57px;font-size:18.5px;color:#404040;left:19.50px;transform:translateX(-50%);">14</span>
<span class="t" style="top:323.50px;font-size:28px;color:#000;letter-spacing:1.7px;left:43.30px;-webkit-text-stroke:0.7px #000;">Weihnachtseinkäufe</span>
<span class="t" style="top:388.60px;font-size:20px;color:#ffffff;letter-spacing:0.6px;left:42.00px;-webkit-text-stroke:0.95px #fff;">Wer hat's gekauft?</span>
<span class="t" style="top:388.60px;font-size:20px;color:#ffffff;letter-spacing:0.6px;left:268.00px;-webkit-text-stroke:0.95px #fff;">Was hast Du gekauft?</span>
<span class="t" style="top:388.60px;font-size:20px;color:#ffffff;letter-spacing:0.6px;left:522.00px;-webkit-text-stroke:0.95px #fff;">Wo hast Du's gekauft?</span>
<span class="t" style="top:388.60px;font-size:20px;color:#ffffff;letter-spacing:0.6px;left:781.00px;-webkit-text-stroke:0.95px #fff;">Kategorie</span>
<span class="t" style="top:388.60px;font-size:20px;color:#ffffff;letter-spacing:0.6px;left:938.00px;-webkit-text-stroke:0.95px #fff;">Für wen?</span>
<span class="t" style="top:388.60px;font-size:20px;color:#ffffff;letter-spacing:0.6px;left:1075.00px;-webkit-text-stroke:0.95px #fff;">Preis</span>
<span class="t" style="top:416.70px;font-size:20px;color:#000;letter-spacing:0.3px;left:41.50px;">Andrea</span>
<span class="t" style="top:416.70px;font-size:20px;color:#000;letter-spacing:0.3px;left:267.50px;">Glühwein (10 Flaschen)</span>
<span class="t" style="top:416.70px;font-size:20px;color:#000;letter-spacing:0.3px;left:521.50px;">Supermarkt</span>
<span class="t" style="top:416.70px;font-size:20px;color:#000;letter-spacing:0.3px;left:780.50px;">Lebensmittel</span>
<span class="t" style="top:416.70px;font-size:20px;color:#000;letter-spacing:0.3px;left:937.50px;">alle</span>
<span class="t" style="top:416.70px;font-size:20px;color:#000;right:85.70px;">40,00 €</span>
<span class="t" style="top:444.70px;font-size:20px;color:#000;letter-spacing:0.3px;left:41.50px;">Bernd</span>
<span class="t" style="top:444.70px;font-size:20px;color:#000;letter-spacing:0.3px;left:267.50px;">Rheumadecke</span>
<span class="t" style="top:444.70px;font-size:20px;color:#000;letter-spacing:0.3px;left:521.50px;">Amazon</span>
<span class="t" style="top:444.70px;font-size:20px;color:#000;letter-spacing:0.3px;left:780.50px;">Geschenk</span>
<span class="t" style="top:444.70px;font-size:20px;color:#000;letter-spacing:0.3px;left:937.50px;">Oma</span>
<span class="t" style="top:444.70px;font-size:20px;color:#000;right:85.70px;">19,99 €</span>
<span class="t" style="top:472.70px;font-size:20px;color:#000;letter-spacing:0.3px;left:41.50px;">Christiane</span>
<span class="t" style="top:472.70px;font-size:20px;color:#000;letter-spacing:0.3px;left:267.50px;">Modelleisenbahn</span>
<span class="t" style="top:472.70px;font-size:20px;color:#000;letter-spacing:0.3px;left:521.50px;">Spielwaren Ludoland</span>
<span class="t" style="top:472.70px;font-size:20px;color:#000;letter-spacing:0.3px;left:780.50px;">Geschenk</span>
<span class="t" style="top:472.70px;font-size:20px;color:#000;letter-spacing:0.3px;left:937.50px;">Tim &amp; Tom</span>
<span class="t" style="top:472.70px;font-size:20px;color:#000;right:85.70px;">39,99 €</span>
<span class="t" style="top:500.70px;font-size:20px;color:#000;letter-spacing:0.3px;left:41.50px;">Dominik</span>
<span class="t" style="top:500.70px;font-size:20px;color:#000;letter-spacing:0.3px;left:267.50px;">Schokoladentorte</span>
<span class="t" style="top:500.70px;font-size:20px;color:#000;letter-spacing:0.3px;left:521.50px;">Konditorei</span>
<span class="t" style="top:500.70px;font-size:20px;color:#000;letter-spacing:0.3px;left:780.50px;">Lebensmittel</span>
<span class="t" style="top:500.70px;font-size:20px;color:#000;letter-spacing:0.3px;left:937.50px;">alle</span>
<span class="t" style="top:500.70px;font-size:20px;color:#000;right:85.70px;">14,99 €</span>
<span class="t" style="top:641.00px;font-size:20px;color:#000;letter-spacing:0.4px;left:937.00px;-webkit-text-stroke:0.6px #000;">Summe</span>
<span class="t" style="top:641.00px;font-size:20px;color:#000;letter-spacing:0.2px;right:86.00px;-webkit-text-stroke:0.6px #000;">114,97 €</span>
</body></html>
